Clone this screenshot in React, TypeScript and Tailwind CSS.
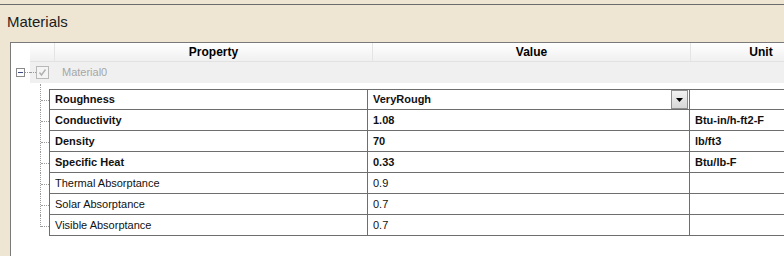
const rows = [
  { name: "Roughness", value: "VeryRough", unit: "", bold: true, combo: true },
  { name: "Conductivity", value: "1.08", unit: "Btu-in/h-ft2-F", bold: true },
  { name: "Density", value: "70", unit: "lb/ft3", bold: true },
  { name: "Specific Heat", value: "0.33", unit: "Btu/lb-F", bold: true },
  { name: "Thermal Absorptance", value: "0.9", unit: "", bold: false },
  { name: "Solar Absorptance", value: "0.7", unit: "", bold: false },
  { name: "Visible Absorptance", value: "0.7", unit: "", bold: false },
];

const font = { fontFamily: '"Liberation Sans", Arial, sans-serif' };

const App = () => {
  return (
    <div
      className="w-[784px] h-[256px] overflow-hidden bg-[#eee5d3] pt-[4px]"
      style={font}
    >
      <div className="h-[252px] border-t border-[#6b6b6b] flex flex-col">
        <div className="h-[37px] pl-[7px] pt-[7px] text-[15px] leading-[20px] text-[#1b1b1b]">
          Materials
        </div>

        <div className="flex-1 ml-[10px] bg-white border-l border-t border-[#7a7a7a] flex flex-col">
          {/* header */}
          <div className="flex h-[19px] ml-[19px] bg-gradient-to-b from-[#ffffff] to-[#f0f0f0] border-b border-[#e2e2e2] text-[12px] font-bold text-black">
            <div className="w-[25px] shrink-0 border-r border-[#e4e4e4]" />
            <div className="w-[318px] shrink-0 border-r border-[#e4e4e4] flex items-center justify-center">
              Property
            </div>
            <div className="w-[318px] shrink-0 border-r border-[#e4e4e4] flex items-center justify-center">
              Value
            </div>
            <div className="w-[140px] shrink-0 flex items-center justify-center">
              Unit
            </div>
          </div>

          {/* material row */}
          <div className="flex h-[21px]">
            <div className="w-[19px] shrink-0 flex items-center">
              <div className="ml-[5px] w-[9px] h-[9px] border border-[#8a8a8a] bg-white flex items-center justify-center">
                <div className="w-[5px] h-px bg-[#3c4a82]" />
              </div>
              <div className="w-[5px] border-t border-dotted border-[#9a9a9a]" />
            </div>
            <div className="flex-1 bg-[#f0f0f0] flex items-center">
              <div className="w-[6px] border-t border-dotted border-[#9a9a9a]" />
              <div className="w-[13px] h-[13px] border border-[#b8b8b8] bg-[#f4f4f4] flex items-center justify-center">
                <svg width="9" height="9" viewBox="0 0 9 9">
                  <path d="M1.5 4.5 L3.5 7 L7.5 1.5" fill="none" stroke="#b0b0b0" strokeWidth="1.4" />
                </svg>
              </div>
              <span className="ml-[13px] text-[11px] text-[#a6a6a6]">Material0</span>
            </div>
          </div>

          {/* gap with tree line */}
          <div className="flex h-[6px]">
            <div className="w-[38px] shrink-0 pl-[29px] flex">
              <div className="w-px h-full border-l border-dotted border-[#9a9a9a] mt-px" />
            </div>
          </div>

          {/* property grid */}
          {rows.map((r, i) => {
            const last = i === rows.length - 1;
            return (
              <div key={r.name} className="flex h-[21px]">
                <div className="w-[38px] shrink-0 pl-[29px] flex">
                  <div className={"w-[9px] border-l border-dotted border-[#9a9a9a] " + (last ? "h-[12px]" : "h-full")}>
                    <div className={"h-[12px] border-b border-dotted border-[#9a9a9a] " + (i === 0 ? "" : "")} />
                  </div>
                </div>
                <div
                  className={
                    "flex-1 flex border-l border-b border-[#6e6e6e] text-[11px] text-[#111] " +
                    (i === 0 ? "border-t" : "")
                  }
                >
                  <div className="w-[318px] shrink-0 border-r border-[#6e6e6e] pl-[5px] flex items-center">
                    <span className={r.bold ? "font-bold" : ""}>{r.name}</span>
                  </div>
                  <div className="w-[322px] shrink-0 border-r border-[#6e6e6e] flex items-center">
                    <span className={"pl-[5px] flex-1 " + (r.bold ? "font-bold" : "")}>{r.value}</span>
                    {r.combo && (
                      <div className="w-[17px] h-[19px] mr-px border border-[#8e8e8e] bg-gradient-to-b from-[#f2f2f2] to-[#d8d8d8] flex items-center justify-center">
                        <svg width="7" height="4" viewBox="0 0 7 4">
                          <path d="M0 0 L7 0 L3.5 4 Z" fill="#000" />
                        </svg>
                      </div>
                    )}
                  </div>
                  <div className="flex-1 pl-[5px] flex items-center font-bold">{r.unit}</div>
                </div>
              </div>
            );
          })}
        </div>
      </div>
    </div>
  );
};

export default App;
